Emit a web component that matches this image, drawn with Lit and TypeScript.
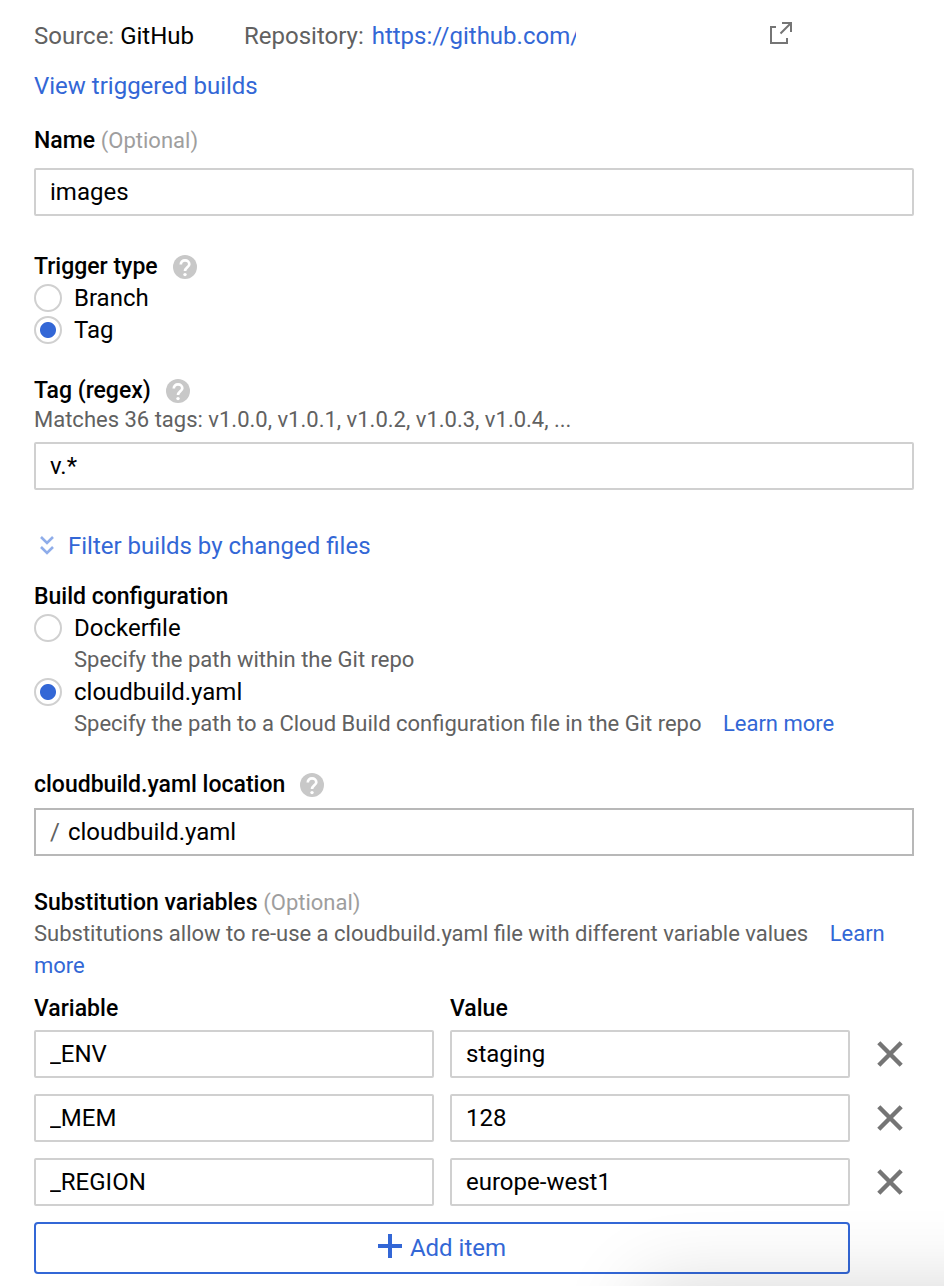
import { LitElement, html, css } from "lit";
import { customElement, property, state } from "lit/decorators.js";

@customElement("help-icon")
class HelpIcon extends LitElement {
  @property() label = "Help";

  static styles = css`
    :host { display: inline-flex; }
    .help { display: flex; padding: 0; border: 0; background: none; cursor: pointer; }
    .glyph { display: block; width: 24px; height: 24px; }
  `;

  render() {
    return html`<button class="help" type="button" aria-label=${this.label}>
      <svg class="glyph" viewBox="0 0 24 24" aria-hidden="true">
        <circle cx="12" cy="12" r="12" fill="#c8c8c8"></circle>
        <path d="M7.8 9.4C7.8 6.9 9.6 5.4 12 5.4s4.300 1.500 4.300 3.800c0 2.900-4.300 3.400-4.300 6.900" fill="none" stroke="#fff" stroke-width="2.7"></path>
        <circle cx="12" cy="19.6" r="1.7" fill="#fff"></circle>
      </svg>
    </button>`;
  }
}

interface Variable {
  name: string;
  value: string;
}

@customElement("app-root")
class AppRoot extends LitElement {
  @state() triggerType = "tag";
  @state() config = "cloudbuild";
  @state() variables: Variable[] = [
    { name: "_ENV", value: "staging" },
    { name: "_MEM", value: "128" },
    { name: "_REGION", value: "europe-west1" },
  ];

  static styles = css`
    :host {
      display: block;
      position: relative;
      background: #fff;
      color: #000;
      font-family: Roboto, "Liberation Sans", sans-serif;
      font-size: 24px;
      line-height: 32px;
    }
    * { box-sizing: border-box; }
    .form { display: flex; flex-direction: column; padding: 20px 30px 12px 34px; }
    a { color: #3367d6; text-decoration: none; }
    .source { display: flex; align-items: center; }
    .muted { color: #616161; }
    .repository { margin-left: 50px; margin-right: 2px; white-space: pre; }
    .repo-link { width: 204px; overflow: hidden; white-space: nowrap; }
    .external { display: flex; align-self: flex-start; margin-left: 193px; }
    .external-icon { display: block; width: 24px; height: 24px; }
    .builds { margin-top: 18px; }
    .label { display: flex; align-items: center; font-size: 23px; line-height: 30px; font-weight: 500; white-space: pre; }
    .label help-icon { margin-left: 15px; }
    .optional { color: #9e9e9e; font-size: 22px; font-weight: 400; }
    .section { display: flex; flex-direction: column; margin-top: 30px; }
    .section.near { margin-top: 24px; }
    .section.far { margin-top: 36px; }
    .section.after-link { margin-top: 20px; }
    .section.last { margin-top: 32px; }
    .box {
      width: 100%;
      min-width: 0;
      height: 48px;
      padding: 0 14px;
      border: 2px solid #d0d0d0;
      border-radius: 2px;
      background: none;
      color: #000;
      font: inherit;
      outline: none;
    }
    .box:focus-visible { border-color: #3367d6; }
    .spaced { margin-top: 12px; }
    .snug { margin-top: 8px; }
    .hint { margin: 0; color: #616161; font-size: 22px; line-height: 28px; }
    .hint.tall { line-height: 32px; }
    .hint.indent { padding-left: 40px; line-height: 32px; }
    .learn { margin-left: 16px; }
    .option { display: flex; align-items: center; gap: 12px; }
    .radio {
      appearance: none;
      flex: none;
      width: 28px;
      height: 28px;
      margin: 0;
      border: 2px solid #d0d0d0;
      border-radius: 50%;
      background: #fff;
    }
    .radio:checked { background: radial-gradient(circle, #3367d6 0 7.5px, #fff 8.5px); }
    .filter { display: flex; align-items: center; gap: 14px; margin-top: 40px; padding: 0 0 0 6px; border: 0; background: none; color: #3367d6; font: inherit; cursor: pointer; }
    .chevrons { width: 14px; height: 20px; }
    .path { display: flex; align-items: center; border-color: #b8b8b8; border-radius: 0; }
    .path-input { flex: 1; min-width: 0; padding: 0; margin-left: 8px; border: 0; background: none; color: #000; font: inherit; outline: none; }
    .variables { display: grid; grid-template-columns: 1fr 1fr 48px; column-gap: 16px; row-gap: 16px; margin-top: 12px; }
    .variables .label { margin-bottom: -10px; }
    .remove { display: flex; align-items: center; justify-content: center; padding: 0; border: 0; background: none; cursor: pointer; }
    .cross { width: 28px; height: 28px; }
    .add {
      grid-column: 1 / 3;
      display: flex;
      align-items: center;
      justify-content: center;
      gap: 8px;
      height: 52px;
      padding: 0;
      border: 2px solid #3367d6;
      border-radius: 4px;
      background: none;
      color: #3367d6;
      font: inherit;
      cursor: pointer;
    }
    .plus { width: 24px; height: 28px; }
    /* Soft shadow cast upwards by whatever sits under the form's right side. */
    .shade {
      position: absolute;
      right: 0;
      bottom: 0;
      width: 400px;
      height: 110px;
      overflow: hidden;
      pointer-events: none;
    }
    .shade::after {
      content: "";
      position: absolute;
      top: 100%;
      left: 96px;
      width: 600px;
      height: 300px;
      border-radius: 12px;
      box-shadow: 0 0 80px rgba(0, 0, 0, 0.16);
    }
  `;

  private remove(index: number) {
    this.variables = this.variables.filter((_, i) => i !== index);
  }

  private option(group: string, id: string, text: string, checked: boolean, pick: () => void) {
    return html`<label class="option">
      <input class="radio" type="radio" name=${group} value=${id} .checked=${checked} @change=${pick} />
      <span>${text}</span>
    </label>`;
  }

  private row(item: Variable, index: number) {
    return html`
      <input class="box" type="text" aria-label="Variable ${index + 1}" .value=${item.name} />
      <input class="box" type="text" aria-label="Value ${index + 1}" .value=${item.value} />
      <button class="remove" type="button" aria-label="Remove ${item.name}" @click=${() => this.remove(index)}>
        <svg class="cross" viewBox="0 0 28 28" aria-hidden="true">
          <path d="M2.800 2.800l22.400 22.400M25.200 2.800l-22.400 22.400" stroke="#757575" stroke-width="4.400"></path>
        </svg>
      </button>
    `;
  }

  render() {
    return html`
      <form class="form" @submit=${(e: Event) => e.preventDefault()}>
        <div class="source">
          <span><span class="muted">Source:</span> GitHub</span>
          <span class="repository muted">Repository: </span>
          <a class="repo-link" href="#">https://github.com/</a>
          <a class="external" href="#" aria-label="Open repository">
            <svg class="external-icon" viewBox="0 0 24 24" aria-hidden="true">
              <path d="M7 7H2v16h16v-5" fill="none" stroke="#757575" stroke-width="2"></path>
              <path d="M13 3h9v9M22 3L11.500 13.500" fill="none" stroke="#757575" stroke-width="2"></path>
            </svg>
          </a>
        </div>
        <div class="builds"><a href="#">View triggered builds</a></div>

        <div class="section near">
          <label class="label" for="name">Name <span class="optional">(Optional)</span></label>
          <input class="box spaced" id="name" type="text" .value=${"images"} />
        </div>

        <div class="section far" role="radiogroup" aria-labelledby="trigger-label">
          <div class="label"><span id="trigger-label">Trigger type</span><help-icon label="About trigger types"></help-icon></div>
          ${this.option("trigger", "branch", "Branch", this.triggerType === "branch", () => (this.triggerType = "branch"))}
          ${this.option("trigger", "tag", "Tag", this.triggerType === "tag", () => (this.triggerType = "tag"))}
        </div>

        <div class="section">
          <div class="label"><label for="regex">Tag (regex)</label><help-icon label="About tag patterns"></help-icon></div>
          <p class="hint">Matches 36 tags: v1.0.0, v1.0.1, v1.0.2, v1.0.3, v1.0.4, ...</p>
          <input class="box snug" id="regex" type="text" .value=${"v.*"} />
        </div>

        <button class="filter" type="button">
          <svg class="chevrons" viewBox="0 0 14 20" aria-hidden="true">
            <path d="M1 1l6 6 6-6M1 11l6 6 6-6" fill="none" stroke="#8fadea" stroke-width="2.600"></path>
          </svg>
          <span>Filter builds by changed files</span>
        </button>

        <div class="section after-link" role="radiogroup" aria-labelledby="config-label">
          <div class="label" id="config-label">Build configuration</div>
          ${this.option("config", "dockerfile", "Dockerfile", this.config === "dockerfile", () => (this.config = "dockerfile"))}
          <p class="hint indent">Specify the path within the Git repo</p>
          ${this.option("config", "cloudbuild", "cloudbuild.yaml", this.config === "cloudbuild", () => (this.config = "cloudbuild"))}
          <p class="hint indent">Specify the path to a Cloud Build configuration file in the Git repo <a class="learn" href="#">Learn more</a></p>
        </div>

        <div class="section">
          <div class="label"><label for="location">cloudbuild.yaml location</label><help-icon label="About the file location"></help-icon></div>
          <div class="box path snug">
            <span class="muted">/</span>
            <input class="path-input" id="location" type="text" .value=${"cloudbuild.yaml"} />
          </div>
        </div>

        <div class="section last">
          <div class="label">Substitution variables <span class="optional">(Optional)</span></div>
          <p class="hint tall">Substitutions allow to re-use a cloudbuild.yaml file with different variable values <a class="learn" href="#">Learn more</a></p>
          <div class="variables">
            <div class="label">Variable</div>
            <div class="label">Value</div>
            <span></span>
            ${this.variables.map((item, i) => this.row(item, i))}
            <button class="add" type="button" @click=${() => (this.variables = [...this.variables, { name: "", value: "" }])}>
              <svg class="plus" viewBox="0 0 24 28" aria-hidden="true">
                <path d="M12 0v24M0 12h24" stroke="#3367d6" stroke-width="4"></path>
              </svg>
              <span>Add item</span>
            </button>
          </div>
        </div>
      </form>
      <div class="shade"></div>
    `;
  }
}
